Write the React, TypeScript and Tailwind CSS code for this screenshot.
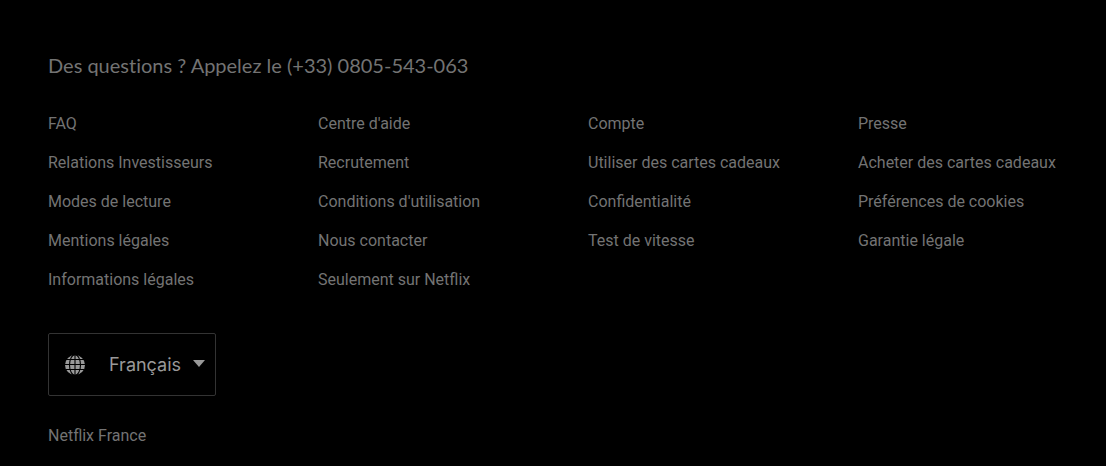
const links: string[] = [
  'FAQ',
  "Centre d'aide",
  'Compte',
  'Presse',
  'Relations Investisseurs',
  'Recrutement',
  'Utiliser des cartes cadeaux',
  'Acheter des cartes cadeaux',
  'Modes de lecture',
  "Conditions d'utilisation",
  'Confidentialité',
  'Préférences de cookies',
  'Mentions légales',
  'Nous contacter',
  'Test de vitesse',
  'Garantie légale',
  'Informations légales',
  'Seulement sur Netflix',
];

function GlobeIcon() {
  return (
    <svg viewBox="0 0 20 20" className="size-5" aria-hidden="true">
      <circle cx="10" cy="10" r="10" fill="#999999" />
      <g fill="none" stroke="#000000" strokeWidth="1.1">
        <path d="M10 0v20M0 9.5h20M1 4.5h18M1 14.5h18" />
        <ellipse cx="10" cy="10" rx="5.5" ry="10.4" />
      </g>
    </svg>
  );
}

function LanguagePicker() {
  return (
    <div className="relative w-[168px]">
      <select
        aria-label="Langue"
        defaultValue="fr"
        className="h-[63px] w-full appearance-none rounded-xs border border-[#333333] bg-black pl-[60px] pr-7 font-['Inter',sans-serif] text-lg text-[#999999]"
      >
        <option value="fr">Français</option>
        <option value="en">English</option>
      </select>
      <div className="pointer-events-none absolute inset-0 flex items-center justify-between pl-[17px] pr-[11px]">
        <GlobeIcon />
        <svg viewBox="0 0 12 9" className="h-[9px] w-3" aria-hidden="true">
          <path d="M0 0h12L6 7z" fill="#999999" />
        </svg>
      </div>
    </div>
  );
}

export default function App() {
  return (
    <footer className="min-h-screen bg-black px-12 pt-[51px] pb-[18px] font-['Roboto',sans-serif] text-base text-[#737373]">
      <p className="font-['Lato',sans-serif] text-xl [font-variant-ligatures:none]">
        <a href="#telephone">Des questions ? Appelez le (+33) 0805-543-063</a>
      </p>
      <ul className="mt-[33px] grid grid-cols-4 gap-x-[70px] gap-y-[15px] whitespace-nowrap">
        {links.map((label) => (
          <li key={label}>
            <a href="#aide" className="hover:underline">
              {label}
            </a>
          </li>
        ))}
      </ul>
      <div className="mt-[41px]">
        <LanguagePicker />
      </div>
      <p className="mt-7">Netflix France</p>
    </footer>
  );
}
